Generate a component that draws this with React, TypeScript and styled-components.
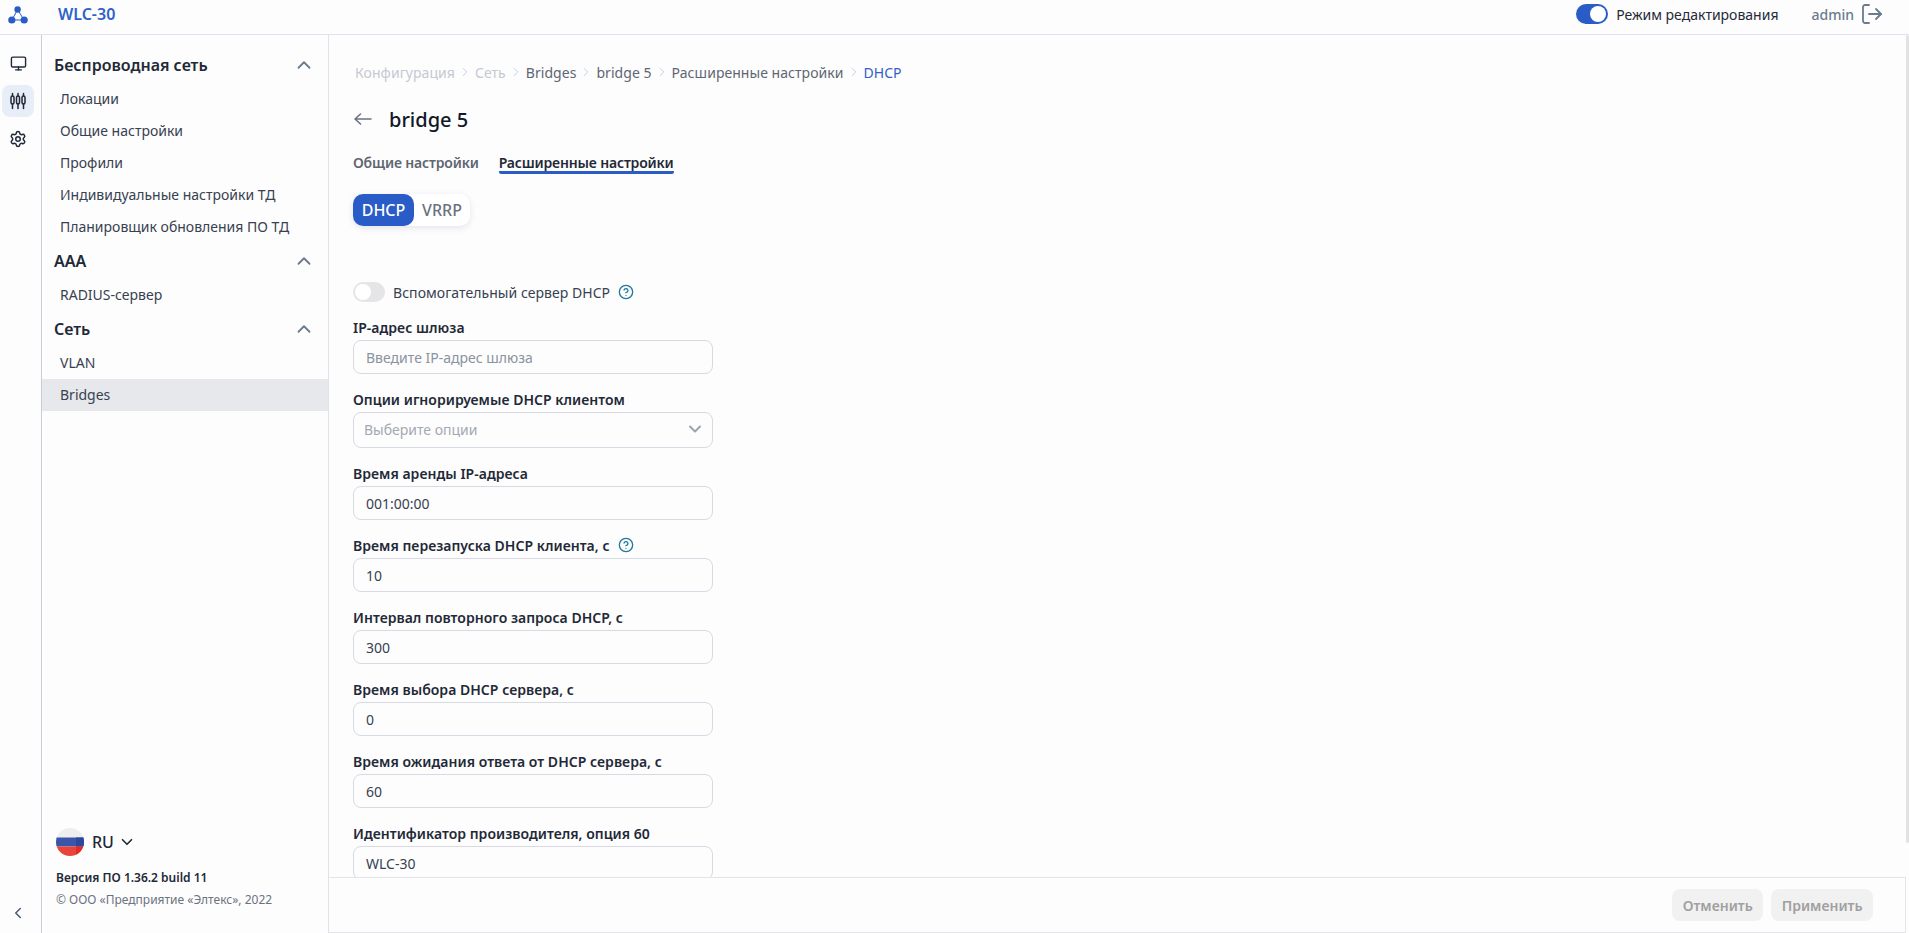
import React from 'react';
import styled, { createGlobalStyle } from 'styled-components';
import { ChevronDown, ChevronLeft, ChevronRight, ChevronUp, CircleHelp, LogOut, Monitor, Settings } from 'lucide-react';

const GlobalStyle = createGlobalStyle`
  html, body, #root {
    margin: 0;
    height: 100%;
  }
  body {
    font-family: "Noto Sans", "Open Sans", sans-serif;
    font-size: 14px;
    color: #1f2937;
    background: #fdfdfd;
    overflow: hidden;
  }
  * {
    box-sizing: border-box;
  }
`;

const Page = styled.div`
  height: 933px;
  display: flex;
  flex-direction: column;
`;

const Header = styled.header`
  height: 35px;
  flex: none;
  display: flex;
  align-items: center;
  padding: 0 25px 6px 8px;
  border-bottom: 1px solid #e2e3ee;
`;

const Logo = styled.svg`
  width: 20px;
  height: 20px;
  flex: none;
`;

const Product = styled.div`
  margin-left: 30px;
  font-size: 16px;
  font-weight: 600;
  color: #2f62c9;
`;

const HeaderRight = styled.div`
  margin-left: auto;
  display: flex;
  align-items: center;
`;

const Toggle = styled.span<{ $on?: boolean }>`
  position: relative;
  display: block;
  width: 32px;
  height: 20px;
  flex: none;
  border-radius: 10px;
  background: ${(p) => (p.$on ? '#2a5cc7' : '#e5e5e7')};

  &::after {
    content: '';
    position: absolute;
    top: 2px;
    left: ${(p) => (p.$on ? '14px' : '2px')};
    width: 16px;
    height: 16px;
    border-radius: 50%;
    background: #fff;
  }
`;

const ModeText = styled.span`
  margin-left: 8px;
  color: #1f2937;
`;

const UserName = styled.span`
  margin-left: 33px;
  font-weight: 500;
  color: #6b7a90;
`;

const LogoutButton = styled.span`
  display: flex;
  margin-left: 6px;
  color: #6b7a90;
`;

const Body = styled.div`
  flex: 1;
  min-height: 0;
  display: flex;
`;

const Rail = styled.nav`
  width: 42px;
  flex: none;
  display: flex;
  flex-direction: column;
  gap: 6px;
  padding: 12px 0 4px 2px;
  border-right: 1px solid #c9ccd8;
`;

const RailItem = styled.div<{ $active?: boolean }>`
  width: 32px;
  height: 32px;
  display: flex;
  align-items: center;
  justify-content: center;
  border-radius: 8px;
  color: #1f2937;
  background: ${(p) => (p.$active ? '#e8eef8' : 'transparent')};
`;

const RailCollapse = styled(RailItem)`
  margin-top: auto;
  color: #4b5a70;
`;

const Sidebar = styled.aside`
  width: 287px;
  flex: none;
  display: flex;
  flex-direction: column;
  padding-top: 12px;
  border-right: 1px solid #e1e3ea;
`;

const GroupHeader = styled.div`
  height: 36px;
  display: flex;
  align-items: center;
  justify-content: space-between;
  padding: 0 13px 0 12px;
  font-size: 16px;
  font-weight: 600;
  color: #1f2937;
  svg {
    color: #6b7a90;
  }
`;

const MenuItem = styled.div<{ $active?: boolean }>`
  height: 32px;
  display: flex;
  align-items: center;
  padding: 0 0 2px 18px;
  color: #374151;
  background: ${(p) => (p.$active ? '#e7e8ec' : 'transparent')};
`;

const SideFooter = styled.div`
  margin-top: auto;
  padding: 0 14px 23px;
`;

const LangRow = styled.div`
  display: flex;
  align-items: center;
  font-size: 16px;
  font-weight: 500;
  color: #1f2937;
  svg:last-child {
    margin-left: 4px;
  }
`;

const Flag = styled.svg`
  width: 28px;
  height: 28px;
  margin-right: 8px;
`;

const Version = styled.div`
  margin-top: 12px;
  font-size: 12px;
  line-height: 20px;
  font-weight: 600;
  color: #1f2937;
`;

const Copyright = styled.div`
  margin-top: 2px;
  font-size: 12px;
  line-height: 20px;
  color: #6b7280;
`;

const Main = styled.main`
  position: relative;
  flex: 1;
  min-width: 0;
  display: flex;
`;

const Scroll = styled.div`
  flex: 1;
  overflow: hidden;
  padding: 27px 24px 0;
`;

const ScrollThumb = styled.div`
  position: absolute;
  top: 0;
  right: 0;
  width: 3px;
  height: 808px;
  border-radius: 2px;
  background: #e2e2e2;
`;

const Crumbs = styled.div`
  height: 20px;
  display: flex;
  align-items: center;
  margin-left: 2px;
  letter-spacing: 0.05px;
`;

const Crumb = styled.span<{ $tone: 'muted' | 'normal' | 'current' }>`
  color: ${(p) => (p.$tone === 'muted' ? '#c5c9d2' : p.$tone === 'current' ? '#2f62c9' : '#5f6672')};
`;

const CrumbSep = styled.span`
  display: flex;
  margin: 0 3px;
  color: #b4c6ea;
`;

const TitleRow = styled.div`
  height: 28px;
  margin-top: 23px;
  display: flex;
  align-items: center;
  padding-left: 1px;
  color: #6b7280;
`;

const BackArrow = styled.svg`
  width: 18px;
  height: 12px;
  flex: none;
`;

const Title = styled.h1`
  margin: 0 0 0 17px;
  font-size: 20px;
  font-weight: 500;
  color: #111827;
`;

const Tabs = styled.div`
  margin-top: 20px;
  display: flex;
  gap: 20px;
`;

const Tab = styled.div<{ $active?: boolean }>`
  height: 21px;
  line-height: 20px;
  font-weight: 600;
  letter-spacing: -0.17px;
  color: ${(p) => (p.$active ? '#1f2937' : '#5f6672')};
  border-bottom: ${(p) => (p.$active ? '3px solid #2a5cc7' : 'none')};
  border-radius: 2px;
`;

const Segment = styled.div`
  margin-top: 20px;
  display: inline-flex;
  height: 32px;
  border-radius: 10px;
  background: #fff;
  box-shadow: 0 2px 6px rgba(42, 60, 120, 0.12);
`;

const SegmentItem = styled.div<{ $active?: boolean }>`
  display: flex;
  align-items: center;
  justify-content: center;
  width: ${(p) => (p.$active ? '61px' : '56px')};
  border-radius: 10px;
  font-size: 16px;
  font-weight: 500;
  color: ${(p) => (p.$active ? '#fff' : '#6b7280')};
  background: ${(p) => (p.$active ? '#2a5cc7' : 'transparent')};
`;

const Form = styled.div`
  margin-top: 56px;
  width: 360px;
`;

const SwitchRow = styled.div`
  height: 20px;
  display: flex;
  align-items: center;
  margin-bottom: 16px;
  color: #374151;
`;

const SwitchText = styled.span`
  margin-left: 8px;
  letter-spacing: 0.05px;
`;

const Help = styled.span`
  display: inline-flex;
  margin-left: 8px;
  color: #1f7a9e;
`;

const Field = styled.div`
  margin-bottom: 16px;
`;

const Label = styled.div`
  height: 20px;
  margin-bottom: 2px;
  padding-bottom: 2px;
  display: flex;
  align-items: center;
  font-weight: 600;
  font-size: 14px;
  letter-spacing: 0.03px;
  color: #1f2937;
`;

const TextInput = styled.input`
  display: block;
  width: 100%;
  height: 34px;
  padding: 0 12px;
  border: 1px solid #d7dae2;
  border-radius: 8px;
  background: transparent;
  font: inherit;
  color: #374151;
  outline: none;

  &::placeholder {
    color: #8b92a0;
    opacity: 1;
  }
`;

const SelectBox = styled.div`
  height: 36px;
  display: flex;
  align-items: center;
  justify-content: space-between;
  padding: 0 7px 2px 10px;
  border: 1px solid #d7dae2;
  border-radius: 8px;
  color: #a3a8b4;
  svg {
    color: #9ca3af;
  }
`;

const Footer = styled.div`
  position: absolute;
  left: 0;
  right: 3px;
  bottom: 0;
  height: 56px;
  display: flex;
  align-items: center;
  justify-content: flex-end;
  gap: 8px;
  padding-right: 32px;
  background: #fdfdfd;
  border: 1px solid #e5e5e7;
  border-left: none;
`;

const FooterButton = styled.button`
  height: 32px;
  padding: 0 10.5px;
  border: none;
  border-radius: 8px;
  background: #f1f1f1;
  font: inherit;
  font-weight: 600;
  color: #a0a0a0;
`;

const menu = [
  {
    title: 'Беспроводная сеть',
    items: ['Локации', 'Общие настройки', 'Профили', 'Индивидуальные настройки ТД', 'Планировщик обновления ПО ТД'],
  },
  { title: 'AAA', items: ['RADIUS-сервер'] },
  { title: 'Сеть', items: ['VLAN', 'Bridges'] },
];

const crumbs: { text: string; tone: 'muted' | 'normal' | 'current' }[] = [
  { text: 'Конфигурация', tone: 'muted' },
  { text: 'Сеть', tone: 'muted' },
  { text: 'Bridges', tone: 'normal' },
  { text: 'bridge 5', tone: 'normal' },
  { text: 'Расширенные настройки', tone: 'normal' },
  { text: 'DHCP', tone: 'current' },
];

const TuneIcon = () => (
  <svg width="18" height="18" viewBox="0 0 18 18" fill="none" stroke="currentColor" strokeWidth="1.5" strokeLinecap="round">
    <path d="M3.5 1.5v2M3.5 12v4.5M9 1.5v2M9 12v4.5M14.5 1.5v2M14.5 12v4.5" />
    <rect x="2" y="4" width="3" height="8" rx="1.5" />
    <rect x="7.5" y="4" width="3" height="8" rx="1.5" />
    <rect x="13" y="4" width="3" height="8" rx="1.5" />
  </svg>
);

const App: React.FC = () => {
  return (
    <Page>
      <GlobalStyle />
      <Header>
        <Logo viewBox="0 0 20 20" fill="#2a5cc7">
          <path d="M9.6 5.5 4 16h12Z" fill="none" stroke="#2a5cc7" strokeWidth="1" />
          <circle cx="9.6" cy="5.5" r="3.2" />
          <circle cx="3.8" cy="16" r="3.6" />
          <circle cx="16.2" cy="16" r="3.6" />
        </Logo>
        <Product>WLC-30</Product>
        <HeaderRight>
          <Toggle $on />
          <ModeText>Режим редактирования</ModeText>
          <UserName>admin</UserName>
          <LogoutButton>
            <LogOut size={24} strokeWidth={1.8} />
          </LogoutButton>
        </HeaderRight>
      </Header>
      <Body>
        <Rail>
          <RailItem>
            <Monitor size={17} strokeWidth={2} />
          </RailItem>
          <RailItem $active>
            <TuneIcon />
          </RailItem>
          <RailItem>
            <Settings size={18} strokeWidth={2} />
          </RailItem>
          <RailCollapse>
            <ChevronLeft size={18} strokeWidth={2} />
          </RailCollapse>
        </Rail>
        <Sidebar>
          {menu.map((group) => (
            <React.Fragment key={group.title}>
              <GroupHeader>
                {group.title}
                <ChevronUp size={22} strokeWidth={2} />
              </GroupHeader>
              {group.items.map((item) => (
                <MenuItem key={item} $active={item === 'Bridges'}>
                  {item}
                </MenuItem>
              ))}
            </React.Fragment>
          ))}
          <SideFooter>
            <LangRow>
              <Flag viewBox="0 0 28 28">
                <defs>
                  <clipPath id="flag-clip">
                    <circle cx="14" cy="14" r="14" />
                  </clipPath>
                </defs>
                <g clipPath="url(#flag-clip)">
                  <rect width="28" height="10" fill="#eeeeee" />
                  <rect y="9.5" width="28" height="9" fill="#3b56a8" />
                  <rect y="18.5" width="28" height="10" fill="#e8443c" />
                  <rect x="20" y="9.5" width="8" height="9" fill="#2c479c" />
                  <rect x="20" y="18.5" width="8" height="10" fill="#e32b1f" />
                </g>
              </Flag>
              RU
              <ChevronDown size={18} strokeWidth={2.2} />
            </LangRow>
            <Version>Версия ПО 1.36.2 build 11</Version>
            <Copyright>© ООО «Предприятие «Элтекс», 2022</Copyright>
          </SideFooter>
        </Sidebar>
        <Main>
          <Scroll>
            <Crumbs>
              {crumbs.map((crumb, i) => (
                <React.Fragment key={crumb.text}>
                  <Crumb $tone={crumb.tone}>{crumb.text}</Crumb>
                  {i < crumbs.length - 1 && (
                    <CrumbSep>
                      <ChevronRight size={14} strokeWidth={1.5} />
                    </CrumbSep>
                  )}
                </React.Fragment>
              ))}
            </Crumbs>
            <TitleRow>
              <BackArrow viewBox="0 0 18 12" fill="none" stroke="currentColor" strokeWidth="1.6" strokeLinecap="round" strokeLinejoin="round">
                <path d="M17 6H1M6.5 1 1 6l5.5 5" />
              </BackArrow>
              <Title>bridge 5</Title>
            </TitleRow>
            <Tabs>
              <Tab>Общие настройки</Tab>
              <Tab $active>Расширенные настройки</Tab>
            </Tabs>
            <Segment>
              <SegmentItem $active>DHCP</SegmentItem>
              <SegmentItem>VRRP</SegmentItem>
            </Segment>
            <Form>
              <SwitchRow>
                <Toggle />
                <SwitchText>Вспомогательный сервер DHCP</SwitchText>
                <Help>
                  <CircleHelp size={16} strokeWidth={2} />
                </Help>
              </SwitchRow>
              <Field>
                <Label>IP-адрес шлюза</Label>
                <TextInput readOnly placeholder="Введите IP-адрес шлюза" />
              </Field>
              <Field>
                <Label>Опции игнорируемые DHCP клиентом</Label>
                <SelectBox>
                  Выберите опции
                  <ChevronDown size={20} strokeWidth={2.4} />
                </SelectBox>
              </Field>
              <Field>
                <Label>Время аренды IP-адреса</Label>
                <TextInput readOnly value="001:00:00" />
              </Field>
              <Field>
                <Label>
                  Время перезапуска DHCP клиента, с
                  <Help>
                    <CircleHelp size={16} strokeWidth={2} />
                  </Help>
                </Label>
                <TextInput readOnly value="10" />
              </Field>
              <Field>
                <Label>Интервал повторного запроса DHCP, с</Label>
                <TextInput readOnly value="300" />
              </Field>
              <Field>
                <Label>Время выбора DHCP сервера, с</Label>
                <TextInput readOnly value="0" />
              </Field>
              <Field>
                <Label>Время ожидания ответа от DHCP сервера, с</Label>
                <TextInput readOnly value="60" />
              </Field>
              <Field>
                <Label>Идентификатор производителя, опция 60</Label>
                <TextInput readOnly value="WLC-30" />
              </Field>
            </Form>
          </Scroll>
          <ScrollThumb />
          <Footer>
            <FooterButton>Отменить</FooterButton>
            <FooterButton>Применить</FooterButton>
          </Footer>
        </Main>
      </Body>
    </Page>
  );
};

export default App;
